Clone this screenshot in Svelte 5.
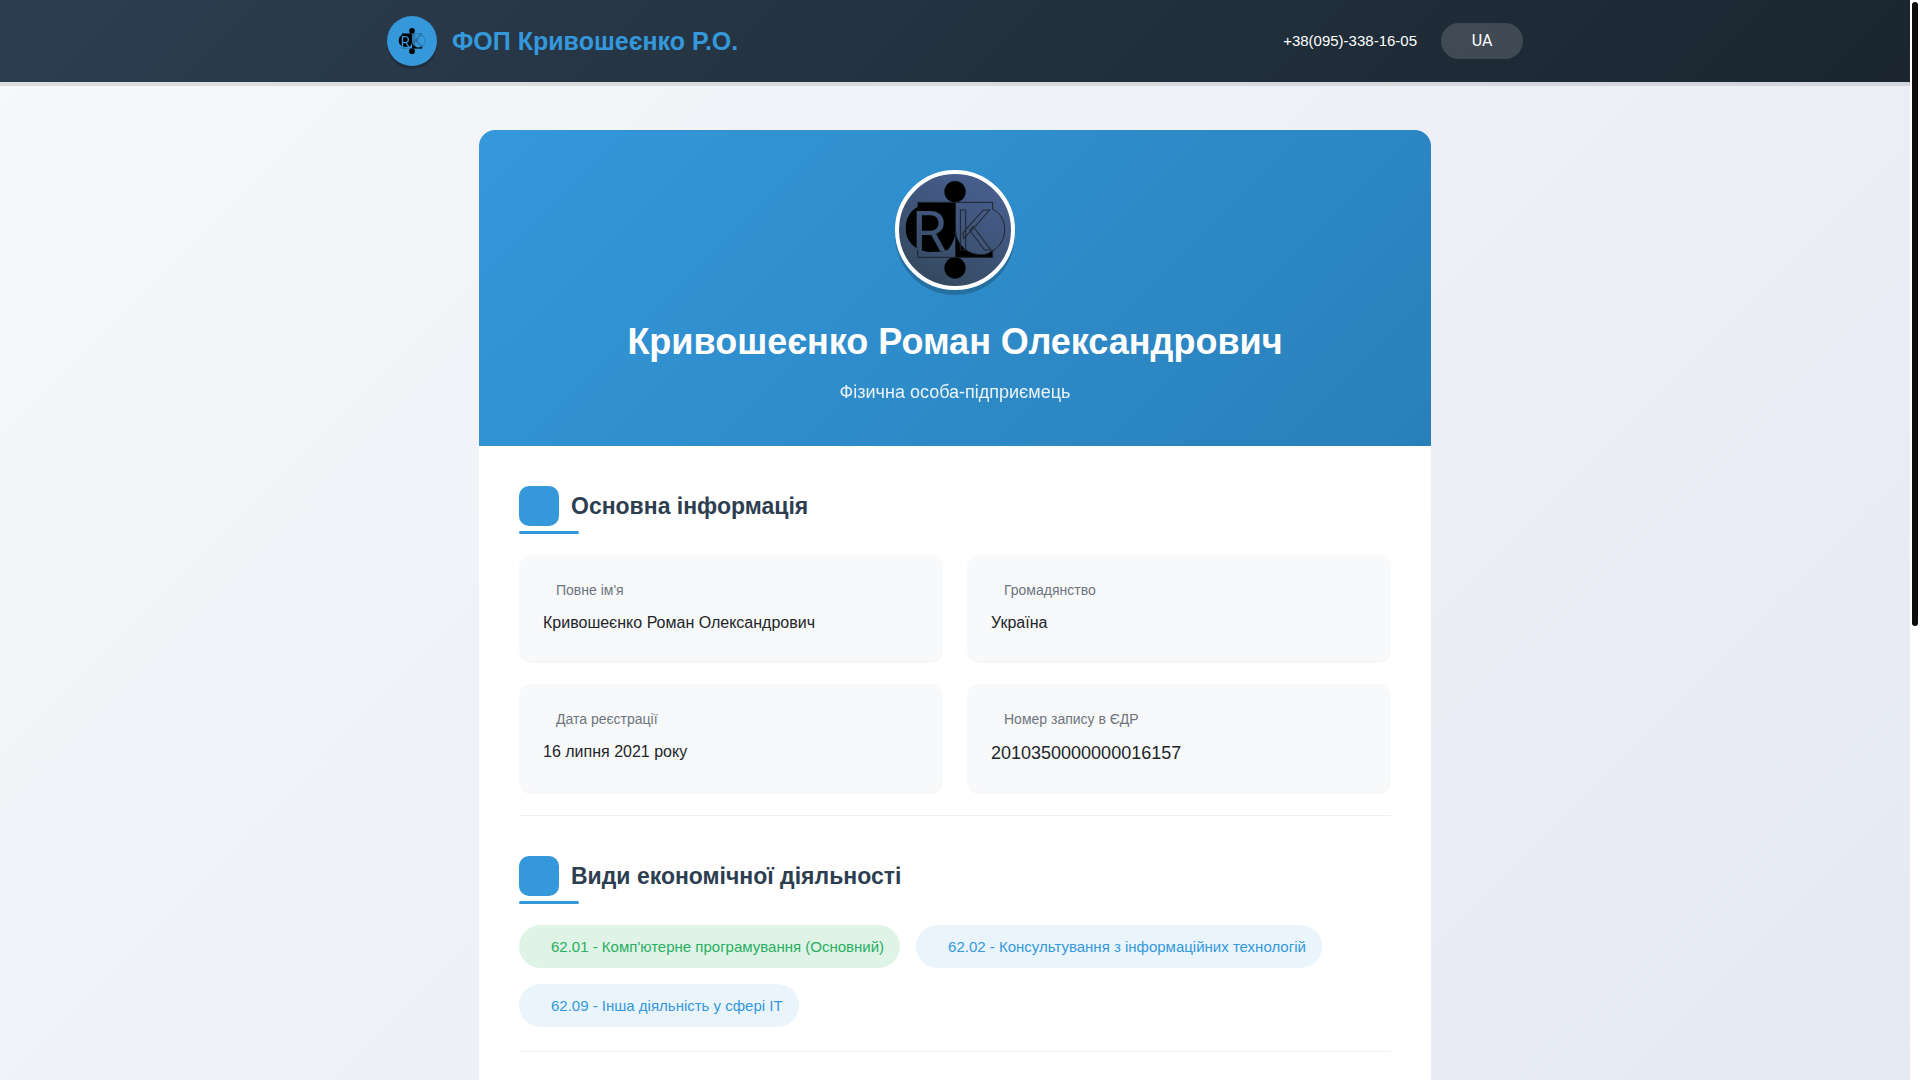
<script lang="ts">
	interface InfoItem {
		label: string;
		value: string;
		large?: boolean;
	}

	interface Activity {
		code: string;
		name: string;
		primary?: boolean;
	}

	const owner = 'Кривошеєнко Роман Олександрович';

	const info: InfoItem[] = [
		{ label: "Повне ім'я", value: owner },
		{ label: 'Громадянство', value: 'Україна' },
		{ label: 'Дата реєстрації', value: '16 липня 2021 року' },
		{ label: 'Номер запису в ЄДР', value: '2010350000000016157', large: true }
	];

	const activities: Activity[] = [
		{ code: '62.01', name: "Комп'ютерне програмування (Основний)", primary: true },
		{ code: '62.02', name: 'Консультування з інформаційних технологій' },
		{ code: '62.09', name: 'Інша діяльність у сфері ІТ' }
	];
</script>

{#snippet logo(id: string)}
	<svg class="logo" viewBox="87 72 336 336" aria-hidden="true">
		<mask id="{id}-mask">
			<rect x="87" y="72" width="336" height="336" fill="#fff" />
			<text x="126" y="302" class="logo__letter" fill="#000">R</text>
		</mask>
		<circle cx="255" cy="125" r="32" />
		<circle cx="255" cy="354" r="32" />
		<g mask="url(#{id}-mask)">
			<path d="M143 157H257V250C252 272 245 287 233 300C222 304 205 306 185 306C140 306 107 275 107 236C107 205 121 182 143 170Z" />
		</g>
		<path d="M256 250C262 278 288 314 334 314C347 314 358 309 368 301V323H256Z" />
		<g fill="none" stroke="#1f242c" stroke-width="3">
			<path d="M143 157H368V178C390 188 404 210 404 238C404 267 389 291 368 302V322H143V300" />
			<path d="M368 301C357 310 347 314 334 314C288 314 256 279 257 236" />
			<text x="257" y="300" class="logo__letter">K</text>
		</g>
	</svg>
{/snippet}

<div class="page">
	<header class="header">
		<div class="header__inner">
			<a class="brand" href="/">
				<span class="brand__icon">{@render logo('brand')}</span>
				<span class="brand__name">ФОП Кривошеєнко Р.О.</span>
			</a>
			<div class="header__actions">
				<a class="phone" href="tel:+380953381605">+38(095)-338-16-05</a>
				<button class="lang" type="button">UA</button>
			</div>
		</div>
	</header>

	<main class="main">
		<article class="profile">
			<div class="hero">
				<div class="avatar">{@render logo('avatar')}</div>
				<h1 class="hero__title">{owner}</h1>
				<p class="hero__subtitle">Фізична особа-підприємець</p>
			</div>

			<div class="content">
				<section class="section">
					<h2 class="section__title"><span class="section__icon"></span>Основна інформація</h2>
					<dl class="info">
						{#each info as item (item.label)}
							<div class="info__item">
								<dt class="info__label">{item.label}</dt>
								<dd class="info__value" class:info__value--large={item.large}>{item.value}</dd>
							</div>
						{/each}
					</dl>
				</section>

				<section class="section">
					<h2 class="section__title"><span class="section__icon"></span>Види економічної діяльності</h2>
					<ul class="tags">
						{#each activities as activity (activity.code)}
							<li class="tag" class:tag--primary={activity.primary}>
								{activity.code} - {activity.name}
							</li>
						{/each}
					</ul>
				</section>
			</div>
		</article>
	</main>
</div>

<div class="scrollbar" aria-hidden="true"><div class="scrollbar__thumb"></div></div>

<style>
	:global(body) {
		font-family: 'Liberation Sans', Arial, sans-serif;
		font-size: 16px;
		line-height: 26px;
		color: #212529;
		background: #fff;
	}

	.page {
		display: flex;
		flex-direction: column;
		min-height: 100vh;
		margin-right: 10px;
		background: linear-gradient(135deg, #f7f8fb, #e5e9f2);
	}

	.header {
		padding: 16px 32px;
		background: linear-gradient(135deg, #2c3e50, #1a252f);
		box-shadow: 0 4px 0 rgba(0, 0, 0, 0.1);
	}
	.header__inner {
		display: flex;
		align-items: center;
		justify-content: space-between;
		max-width: 1136px;
		margin: 0 auto;
	}
	.header__actions {
		display: flex;
		align-items: center;
		gap: 24px;
	}

	.brand {
		display: flex;
		align-items: center;
		gap: 15px;
		color: #3498db;
		text-decoration: none;
	}
	.brand__icon {
		display: grid;
		place-items: center;
		width: 50px;
		height: 50px;
		border-radius: 50%;
		background: #3498db;
		box-shadow: 0 3px 0 rgba(0, 0, 0, 0.2);
	}
	.brand__icon .logo {
		width: 30px;
		height: 30px;
	}
	.brand__name {
		font-size: 25px;
		font-weight: 700;
	}

	.phone {
		font-size: 15px;
		color: #fff;
		text-decoration: none;
	}
	.lang {
		min-width: 82px;
		padding: 6px 24px;
		font-family: Roboto, sans-serif;
		font-size: 16px;
		line-height: 24px;
		color: #fff;
		background: rgba(255, 255, 255, 0.15);
		border: 0;
		border-radius: 20px;
		cursor: pointer;
	}

	.logo {
		display: block;
		width: 100%;
		height: 100%;
	}
	.logo__letter {
		font-family: Roboto, sans-serif;
		font-size: 168px;
	}

	.main {
		display: flex;
		flex: 1;
		flex-direction: column;
		padding: 48px 24px 0;
	}
	.profile {
		flex: 1;
		width: 100%;
		max-width: 952px;
		margin: 0 auto;
		overflow: hidden;
		background: #fff;
		border-radius: 16px 16px 0 0;
	}

	.hero {
		padding: 40px;
		text-align: center;
		color: #fff;
		background: linear-gradient(135deg, #3498db, #2980b9);
	}
	.avatar {
		box-sizing: border-box;
		width: 120px;
		height: 120px;
		margin: 0 auto 24px;
		border: 4px solid #fff;
		border-radius: 50%;
		background: linear-gradient(30deg, #34495e 10%, #465c8b 80%);
		box-shadow: 0 5px 0 rgba(0, 0, 0, 0.2);
	}
	.hero__title {
		margin: 0 0 8px;
		font-size: 36px;
		font-weight: 700;
		line-height: 56px;
	}
	.hero__subtitle {
		margin: 0;
		font-size: 18px;
		line-height: 28px;
		opacity: 0.9;
	}

	.content {
		padding: 0 40px;
	}
	.section {
		padding: 40px 0 24px;
		border-bottom: 1px solid #f1f1f3;
	}
	.section__title {
		position: relative;
		display: flex;
		align-items: center;
		gap: 12px;
		margin: 0 0 21px;
		padding-bottom: 8px;
		font-size: 23px;
		font-weight: 700;
		color: #2c3e50;
	}
	.section__title::after {
		content: '';
		position: absolute;
		bottom: 0;
		left: 0;
		width: 60px;
		height: 3px;
		border-radius: 2px;
		background: #3498db;
	}
	.section__icon {
		width: 40px;
		height: 40px;
		border-radius: 10px;
		background: #3498db;
	}

	.info {
		display: grid;
		grid-template-columns: 1fr 1fr;
		gap: 24px;
		margin: 0;
	}
	.info__item {
		padding: 24px;
		background: #f8f9fb;
		border-radius: 12px;
		box-shadow: 0 3px 0 rgba(0, 0, 0, 0.03);
	}
	.info__label {
		margin-bottom: 8px;
		padding-left: 13px;
		font-size: 14px;
		line-height: 23px;
		color: #6c757d;
	}
	.info__value {
		margin: 0;
	}
	.info__value--large {
		font-size: 18px;
		line-height: 28px;
	}

	.tags {
		display: flex;
		flex-wrap: wrap;
		gap: 16px;
		margin: 0;
		padding: 0;
		list-style: none;
	}
	.tag {
		padding: 10px 16px 10px 32px;
		font-size: 15px;
		line-height: 23px;
		color: #3498db;
		background: rgba(52, 152, 219, 0.1);
		border-radius: 22px;
	}
	.tag--primary {
		color: #27ae60;
		background: rgba(39, 174, 96, 0.15);
	}

	.scrollbar {
		position: fixed;
		top: 0;
		right: 0;
		bottom: 0;
		box-sizing: border-box;
		width: 10px;
		padding: 2px;
		background: #fff;
	}
	.scrollbar__thumb {
		height: 58%;
		border-radius: 3px;
		background: #0c0d0d;
	}
</style>
